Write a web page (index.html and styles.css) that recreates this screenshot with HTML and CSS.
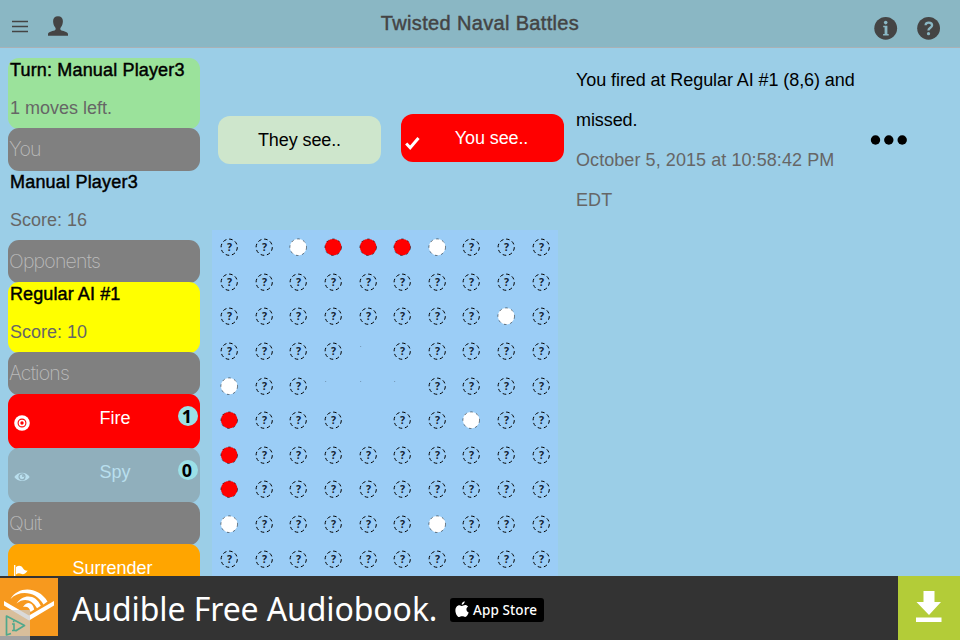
FILE: index.html
```html
<!DOCTYPE html>
<html lang="en">
<head>
<meta charset="utf-8">
<title>Twisted Naval Battles</title>
<link rel="stylesheet" href="styles.css">
</head>
<body>
<div class="app">
  <header class="bar">
    <div class="bar-left">
      <svg class="menu-icon" width="18" height="14" viewBox="0 0 18 14"><path d="M1 1.500h16M1 6.500h16M1 11.500h16" stroke="#444" stroke-width="1.300"/></svg>
      <svg class="user-icon" width="20" height="20" viewBox="0 0 20 20"><path fill="#444" d="M10 .3C7 .3 5.100 2 5.100 5c0 2.500.7 4.800 2 6.200.7.800.8 2.100.1 2.700C6 15 0 15.400 0 18v1.800h20V18c0-2.600-6-3-7.200-4.100-.7-.6-.6-1.900.1-2.700 1.300-1.400 2-3.700 2-6.200C14.900 2 13 .3 10 .3z"/></svg>
    </div>
    <h1>Twisted Naval Battles</h1>
    <div class="bar-right">
      <svg width="24" height="24" viewBox="0 0 24 24"><circle cx="11.700" cy="12.300" r="11.400" fill="#444"/><circle cx="11.700" cy="6.600" r="1.800" fill="#8ab7c4"/><path d="M9.200 9.700h4.200v8.300h1.300v1.500H9.100V18h1.500v-6.700H9.200z" fill="#8ab7c4"/></svg>
      <svg width="24" height="24" viewBox="0 0 24 24"><circle cx="11.600" cy="12.300" r="11.400" fill="#444"/><path d="M8.600 9.200C8.600 7.500 9.800 6.600 11.800 6.600s3.300 1 3.300 2.700c0 2.500-3.700 2.400-3.700 5.300" fill="none" stroke="#8ab7c4" stroke-width="2.300"/><circle cx="11.500" cy="17.700" r="1.600" fill="#8ab7c4"/></svg>
    </div>
  </header>

  <main class="content">
    <aside class="side">
      <section class="card green"><b class="turn">Turn: Manual Player3</b><p>1 moves left.</p></section>
      <h2>You</h2>
      <section class="card"><b>Manual Player3</b><p>Score: 16</p></section>
      <h2>Opponents</h2>
      <section class="card yellow"><b class="ai">Regular AI #1</b><p>Score: 10</p></section>
      <h2>Actions</h2>
      <div class="action fire">
        <svg width="16" height="16" viewBox="0 0 16 16"><circle cx="8" cy="8" r="7.800" fill="#fff"/><circle cx="8" cy="8" r="3.900" fill="none" stroke="red" stroke-width="1.100"/><circle cx="8" cy="8" r="1.700" fill="red"/></svg>
        <span>Fire</span><i class="count">1</i>
      </div>
      <div class="action spy">
        <svg width="16" height="16" viewBox="0 0 16 16"><path d="M.3 8C4 2.300 12 2.300 15.700 8 12 13.300 4 13.300.3 8z" fill="#b9dfee"/><circle cx="8" cy="7.800" r="3" fill="none" stroke="#90afbc" stroke-width="1.200"/><circle cx="9" cy="7" r="1" fill="#90afbc"/></svg>
        <span>Spy</span><i class="count">0</i>
      </div>
      <h2>Quit</h2>
      <div class="action surrender">
        <svg width="16" height="16" viewBox="0 0 16 16"><path d="M.7 0v15" stroke="#fff" stroke-width="1.300"/><path d="M2 2c3-2 5-1.500 7 1.200.9 1.700 2.500 2.600 4.700 2.400C12 8.700 9 10 7 8.800 5.500 8 3.700 8 2 9.500z" fill="#fff"/></svg>
        <span>Surrender</span>
      </div>
    </aside>

    <section class="play">
      <div class="views">
        <div class="view they"><span>They see..</span></div>
        <div class="view you"><svg width="16" height="16" viewBox="0 0 16 16"><path d="M1.200 9.500 5.200 13.700 13.500 4" fill="none" stroke="#fff" stroke-width="3"/></svg><span>You see..</span></div>
      </div>
      <div class="board" id="board"></div>
    </section>

    <section class="log">
      <div class="entry">
        <p class="msg">You fired at Regular AI #1 (8,6) and<br>missed.</p>
        <p class="date">October 5, 2015 at 10:58:42 PM<br>EDT</p>
      </div>
      <svg class="dots" width="38" height="10" viewBox="0 0 38 10"><circle cx="5.500" cy="5" r="4.700"/><circle cx="18.800" cy="5" r="4.700"/><circle cx="32.200" cy="5" r="4.700"/></svg>
    </section>
  </main>

  <footer class="ad">
    <div class="ad-logo">
      <svg width="58" height="58" viewBox="0 0 58 58"><rect width="58" height="58" fill="#f7991e"/><path d="M4 23 29 37.500 54 23v4.500L29 42.500 4 27.500z" fill="#fff"/><path d="M10.500 21C18 8 38 8 47.500 23.500L43.500 26.500C36 13.500 20 11.500 10.500 21z" fill="#fff"/><path d="M16.500 25.500C23 15.500 36 16 40.800 27.800L37 30.300C32.500 22 24.500 19 16.500 25.500z" fill="#fff"/><path d="M23 29c4-6 9.500-5 11.200 2.500L30.500 34c-.7-4.500-3.500-6-7.500-5z" fill="#fff"/></svg>
      <svg class="adchoice" width="30" height="30" viewBox="0 0 30 30"><rect width="30" height="30" fill="#ccc" fill-opacity=".72"/><path d="M11 23.500 6.500 25V6L24.500 15.500 15.500 21" fill="none" stroke="#4fa88c" stroke-width="1.700" stroke-linejoin="round"/><path d="M12 14h2v6.500M12 20.500h4M13.700 10.500v1.700" fill="none" stroke="#4fa88c" stroke-width="1.600"/></svg>
    </div>
    <span class="ad-text">Audible Free Audiobook.</span>
    <span class="store"><svg width="14" height="17" viewBox="0 0 14 17"><path d="M9.700.3c.1 1.600-1.200 3.500-3 3.500C6.500 2.100 8 .6 9.700.3zM7 5c.8 0 1.700-.9 3.200-.9 1.100 0 2.200.6 2.900 1.500-2.500 1.500-2.100 4.800.6 5.900C13 13.300 11.600 16 10.200 16c-1.100 0-1.600-.7-3-.7s-2 .7-3 .7C2.400 16 .4 12.500.4 9.400.4 6.400 2.200 4.200 4.500 4.200 5.700 4.200 6.500 5 7 5z" fill="#fff"/></svg><span>App Store</span></span>
    <div class="download"><svg width="28" height="32" viewBox="0 0 28 32"><path d="M8.500 0h11v11H26L14 24 1.500 11h7zM1 26.500h25.500V31H1z" fill="#fff"/></svg></div>
  </footer>
</div>
<script src="script.js"></script>
</body>
</html>
```
FILE: styles.css
```css
* { box-sizing: border-box; }
body { margin: 0; font: 18px "Liberation Sans", Arial, sans-serif; color: #000; }
p, h1, h2 { margin: 0; font-weight: 400; }
svg { display: block; flex: none; }
.app { width: 960px; height: 640px; overflow: hidden; display: flex; flex-direction: column; background: #9bcee7; }

.bar { height: 48px; flex: none; background: #8ab7c4; border-bottom: 1px solid #aab1b5; display: grid; grid-template-columns: 1fr auto 1fr; }
.bar-left { display: flex; padding: 16px 0 0 11px; }
.menu-icon { margin-top: 4px; }
.user-icon { margin-left: 19px; }
.bar h1 { font-size: 20px; line-height: 46px; color: #444; -webkit-text-stroke: .45px #444; letter-spacing: .34px; }
.bar-right { display: flex; justify-content: flex-end; gap: 19px; padding: 16px 19px 0 0; }

.content { height: 528px; flex: none; overflow: hidden; display: flex; }
.side { width: 192px; margin: 10px 0 0 8px; flex: none; }
.side > * { border-radius: 11px; margin-bottom: -1px; }
.card { height: 71px; padding-left: 2px; line-height: 24px; }
.card b { display: block; font-weight: 400; -webkit-text-stroke: .45px #000; letter-spacing: .2px; white-space: nowrap; }
.card .turn { letter-spacing: .16px; }
.card .ai { letter-spacing: .1px; }
.card p { margin-top: 14px; color: #666; }
.green { background: #9be29b; }
.yellow { background: #ff0; }
.side h2 { height: 43px; background: #808080; color: #bbb; font: 200 19.5px/42px Inter, sans-serif; padding-left: 1px; letter-spacing: -.8px; }
.action { height: 55px; color: #fff; display: grid; grid-template-columns: 16px 1fr 20px; padding: 0 2px 0 6px; text-align: center; line-height: 48px; }
.action svg { margin-top: 21px; }
.action span { padding-left: 22px; }
.fire { background: #f00; }
.spy { background: #90afbc; color: #b9dfee; }
.surrender { background: orange; }
.action.surrender span { padding-left: 17px; }
.count { width: 20px; height: 20px; margin-top: 12px; border-radius: 50%; background: #9be0e7; color: #000; font: 700 18px/20px "Noto Sans", sans-serif; text-indent: -2px; }

.play { width: 364px; flex: none; padding-left: 12px; }
.views { height: 182px; padding: 66px 0 0 6px; display: flex; gap: 20px; }
.view { width: 163px; height: 48px; flex: none; border-radius: 12px; line-height: 48px; text-align: center; letter-spacing: -.1px; }
.they { background: #cee6cc; margin-top: 2px; }
.you { background: #f00; color: #fff; display: flex; }
.you svg { margin: 20px 0 0 4px; }
.you span { flex: 1; padding-right: 2px; }
.board { width: 346px; height: 346px; background: #9bcdf6; display: grid; grid-template: repeat(10, 1fr) / repeat(10, 1fr); place-items: center; }
.mark { fill: none; stroke: #000; stroke-width: 1; stroke-dasharray: 3.600 2.700; }
.disc { stroke: none; }
.disc.hit { fill: #f00; }
.disc.miss { fill: #fff; }
.rim { fill: none; stroke: #000; stroke-width: .5; stroke-dasharray: 2.600 3.700; }
.q { font: 700 10.5px "Noto Sans", sans-serif; text-anchor: middle; fill: #123; }
.speck { fill: #456; }

.log { flex: 1; display: flex; padding: 12px 52px 0 12px; line-height: 40px; }
.entry { flex: 1; width: 0; white-space: nowrap; }
.msg { letter-spacing: -.08px; }
.date { color: #666; letter-spacing: .07px; }
.dots { margin-top: 75px; }

.ad { height: 64px; flex: none; background: #333; display: flex; color: #fff; }
.ad-logo { position: relative; width: 58px; padding-top: 2px; flex: none; }
.adchoice { position: absolute; left: 0; top: 34px; }
.ad-text { width: 378px; font: 32px/66px "Noto Sans", sans-serif; letter-spacing: -.1px; padding-left: 14px; white-space: nowrap; }
.store { width: 94px; height: 24px; margin: 22px 0 0 14px; border-radius: 3px; background: #000; display: flex; padding: 3px 0 0 5px; font: 500 13.5px/18px "Noto Sans", sans-serif; letter-spacing: .1px; white-space: nowrap; }
.store span { margin-left: 4px; }
.download { width: 62px; margin-left: auto; background: #b3cc38; padding: 15px 0 0 17px; }
```
FILE: script.js
```js
// ? unknown, o miss, x hit, . empty, s speck
const rows = [
  "??oxxxo???",
  "??????????",
  "????????o?",
  "????s?????",
  "o??sss????",
  "x???.??o??",
  "x?????????",
  "x?????????",
  "o?????o???",
  "??????????"
];
const shapes = {
  "?": '<circle class="mark" cx="9.200" cy="9.200" r="8.100"/><text class="q" x="9.500" y="13">?</text>',
  "o": '<circle class="disc miss" cx="9.200" cy="9.200" r="8.300"/><circle class="rim" cx="9.200" cy="9.200" r="8.300"/>',
  "x": '<circle class="disc hit" cx="9.200" cy="9.200" r="8.300"/><circle class="rim" cx="9.200" cy="9.200" r="8.300"/>',
  "s": '<circle class="speck" cx="1.800" cy="4.500" r=".4"/>',
  ".": ""
};
document.getElementById("board").innerHTML = [...rows.join("")]
  .map(c => `<svg width="18" height="18" viewBox="0 0 18 18">${shapes[c]}</svg>`)
  .join("");
```
